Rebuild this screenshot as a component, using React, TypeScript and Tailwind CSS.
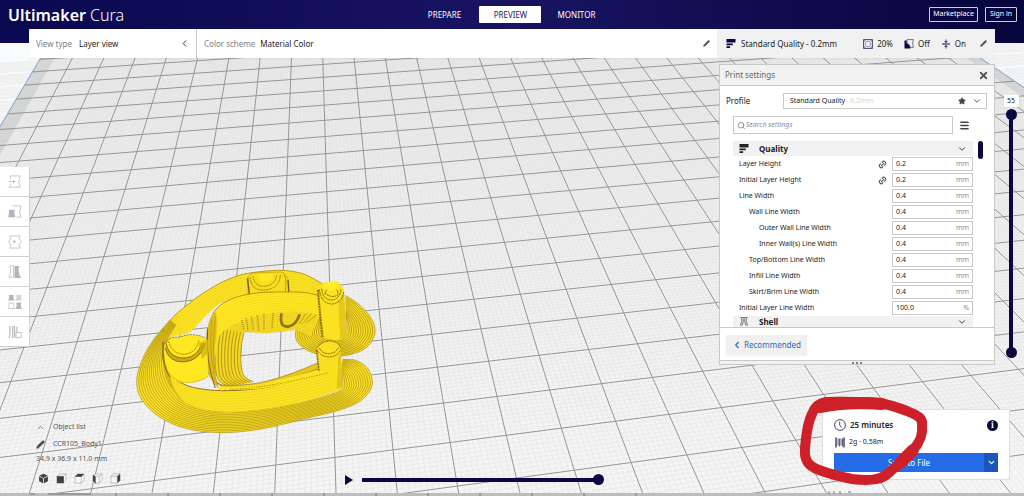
import { ChevronDown, ChevronLeft, ChevronUp, Link2, Menu, Pencil, Search, Star, X } from 'lucide-react';

type Point = [number, number];

const settings = [
  { id: 'layer-height', label: 'Layer Height', value: '0.2', unit: 'mm', indent: 'pl-0', linked: true },
  { id: 'initial-layer-height', label: 'Initial Layer Height', value: '0.2', unit: 'mm', indent: 'pl-0', linked: true },
  { id: 'line-width', label: 'Line Width', value: '0.4', unit: 'mm', indent: 'pl-0', linked: false },
  { id: 'wall-line-width', label: 'Wall Line Width', value: '0.4', unit: 'mm', indent: 'pl-[10px]', linked: false },
  { id: 'outer-wall', label: 'Outer Wall Line Width', value: '0.4', unit: 'mm', indent: 'pl-5', linked: false },
  { id: 'inner-wall', label: 'Inner Wall(s) Line Width', value: '0.4', unit: 'mm', indent: 'pl-5', linked: false },
  { id: 'top-bottom', label: 'Top/Bottom Line Width', value: '0.4', unit: 'mm', indent: 'pl-[10px]', linked: false },
  { id: 'infill', label: 'Infill Line Width', value: '0.4', unit: 'mm', indent: 'pl-[10px]', linked: false },
  { id: 'skirt-brim', label: 'Skirt/Brim Line Width', value: '0.4', unit: 'mm', indent: 'pl-[10px]', linked: false },
  { id: 'initial-line-width', label: 'Initial Layer Line Width', value: '100.0', unit: '%', indent: 'pl-0', linked: false },
];

// Build plate perspective: both line families meet on the horizon
const HORIZON = -395;

const columnX = (i: number, y: number) => 309 + ((72 + 31.35 * i - 309) * (y - HORIZON)) / 454;

const columnPath = (i: number) => `M${columnX(i, 40).toFixed(1)} 40L${columnX(i, 496).toFixed(1)} 496`;

const rowPath = (j: number) => {
  const y = 1 / (0.002172 - 0.00005902 * j) + HORIZON;
  const slope = (HORIZON - y) / (6950 - 309);
  return `M-20 ${(y - 329 * slope).toFixed(1)}L1044 ${(y + 735 * slope).toFixed(1)}`;
};

const range = (from: number, to: number) => Array.from({ length: to - from + 1 }, (_, n) => from + n);

const majorGrid = range(0, 28).map(columnPath).join('') + range(-2, 19).map(rowPath).join('');
const minorGrid =
  range(-5, 285).filter((n) => n % 10 !== 0).map((n) => columnPath(n / 10)).join('') +
  range(-20, 190).filter((n) => n % 10 !== 0).map((n) => rowPath(n / 10)).join('');

const band = (a: number, b: number) =>
  `M${columnX(a, 40)} 40L${columnX(b, 40)} 40L${columnX(b, 496)} 496L${columnX(a, 496)} 496Z`;

const smooth = (pts: Point[]) => {
  let d = `M${pts[0][0]} ${pts[0][1]}`;
  for (let i = 0; i < pts.length - 1; i++) {
    const p0 = pts[Math.max(i - 1, 0)];
    const p1 = pts[i];
    const p2 = pts[i + 1];
    const p3 = pts[Math.min(i + 2, pts.length - 1)];
    const c1 = [p1[0] + (p2[0] - p0[0]) / 6, p1[1] + (p2[1] - p0[1]) / 6];
    const c2 = [p2[0] - (p3[0] - p1[0]) / 6, p2[1] - (p3[1] - p1[1]) / 6];
    d += `C${c1[0].toFixed(1)} ${c1[1].toFixed(1)} ${c2[0].toFixed(1)} ${c2[1].toFixed(1)} ${p2[0]} ${p2[1]}`;
  }
  return d;
};

// Contour lines running from one edge of a surface to the other
const contours = (a: Point[], b: Point[], count: number) =>
  range(0, count)
    .map((n) => smooth(a.map((p, k) => [p[0] + ((b[k][0] - p[0]) * n) / count, p[1] + ((b[k][1] - p[1]) * n) / count] as Point)))
    .join('');

const surface = (a: Point[], b: Point[]) => smooth(a) + smooth([...b].reverse()).replace('M', 'L') + 'Z';

const brimOuter: Point[] = [[150, 180], [100, 240], [66, 300], [50, 365], [66, 420], [120, 472], [200, 506], [310, 518], [430, 506], [560, 475], [660, 450], [725, 420], [757, 375], [745, 328], [710, 302], [668, 298]];
const brimInner: Point[] = [[168, 195], [143, 235], [131, 280], [133, 330], [148, 375], [180, 418], [240, 444], [310, 454], [420, 448], [530, 430], [610, 410], [650, 397], [666, 386], [668, 370], [667, 350], [664, 330]];
const frontTop: Point[] = [[133, 245], [128, 290], [145, 338], [190, 372], [250, 388], [330, 392], [430, 384], [530, 362], [625, 336]];
const frontBottom: Point[] = [[135, 330], [145, 378], [175, 414], [225, 440], [285, 453], [350, 455], [460, 443], [570, 420], [665, 388]];
const backTop: Point[] = [[130, 230], [150, 182], [205, 132], [265, 90], [325, 58], [385, 40], [480, 31], [550, 42], [608, 72]];
const backBottom: Point[] = [[142, 250], [160, 228], [210, 215], [262, 162], [310, 125], [395, 104], [480, 100], [545, 100], [600, 115]];
const archTop: Point[] = [[262, 250], [268, 190], [292, 144], [340, 115], [410, 99], [490, 96], [555, 98], [600, 108]];
const archBottom: Point[] = [[290, 290], [294, 240], [312, 212], [360, 185], [430, 163], [500, 155], [560, 158], [602, 165]];
const ledgeBottom: Point[] = [[365, 290], [364, 235], [370, 218], [395, 217], [440, 219], [490, 214], [530, 211], [570, 230]];
const leftBrimA: Point[] = [[292, 205], [286, 260], [286, 320], [296, 360], [325, 380]];
const leftBrimB: Point[] = [[372, 218], [364, 260], [363, 310], [372, 348], [400, 366]];
const innerFrontTop: Point[] = [[262, 210], [258, 270], [262, 330], [285, 366], [330, 376], [420, 368], [510, 342], [595, 308]];
const innerFrontBottom: Point[] = [[275, 215], [270, 275], [276, 335], [298, 372], [335, 388], [430, 382], [530, 360], [625, 336]];
const padOuter: Point[] = [[600, 160], [550, 180], [527, 215], [535, 250], [575, 277], [630, 288], [690, 284], [740, 262], [765, 218], [752, 172], [715, 132], [676, 106]];
const padInner: Point[] = [[606, 185], [604, 200], [602, 212], [604, 222], [612, 232], [630, 238], [655, 238], [672, 230], [680, 218], [681, 200], [680, 182], [678, 165]];

const Model = () => (
  <g transform="translate(120 260) scale(0.3333)" fill="#f6df20" strokeLinejoin="round">
    <path d={surface(backTop, backBottom)} fill="#fbe223" />
    <path d={contours(backTop, backBottom, 8)} fill="none" stroke="#dfc21a" strokeWidth="1.2" />
    <path d={smooth(backTop)} fill="none" stroke="#b1920f" strokeWidth="2.5" />
    <path d={surface(brimOuter, brimInner)} fill="#fbe128" />
    <path d={contours(brimOuter, brimInner, 13)} fill="none" stroke="#a3850e" strokeWidth="1.8" />
    <path d={surface(padOuter, padInner)} fill="#f7dc25" />
    <path d={contours(padOuter, padInner, 12)} fill="none" stroke="#9b7e0e" strokeWidth="1.8" />

    {/* Boss at the back */}
    <path d="M382 55Q388 40 410 38L485 36Q502 42 506 68L505 100Q440 92 385 106Z" fill="#f7dd1f" stroke="#b8990f" strokeWidth="2" />
    <path d="M383 55L388 103M504 60L507 101" fill="none" stroke="#7a5c07" strokeWidth="4" />
    <g fill="none" stroke="#8a6d0a" strokeWidth="2.5" strokeDasharray="5 2">
      <path d="M390 52Q394 92 432 90Q478 88 481 45" />
      <path d="M399 49Q403 79 433 79Q467 76 470 44" />
      <path d="M492 44Q501 57 496 97" />
    </g>
    <path d="M412 43Q416 68 436 68Q456 64 460 42Z" fill="#ffe923" />

    {/* Inner arch */}
    <path d={surface(archBottom, ledgeBottom)} fill="#f5da22" />
    <path d={contours(archBottom, ledgeBottom, 8)} fill="none" stroke="#c9aa15" strokeWidth="1" strokeDasharray="7 3" />
    <path d={surface(leftBrimA, leftBrimB)} fill="#f3d723" />
    <path d={contours(leftBrimA, leftBrimB, 8)} fill="none" stroke="#937610" strokeWidth="2" />
    <path d={surface(archTop, archBottom)} fill="#ffe823" />
    <path d={contours(archTop, archBottom, 9)} fill="none" stroke="#e6cb1c" strokeWidth="1.4" />
    <path d={smooth(archTop)} fill="none" stroke="#917308" strokeWidth="2.5" strokeDasharray="7 2" />
    <path d="M365 180L372 210M378 174L384 211M394 169L400 211M412 166L416 211M432 163L432 211M459 160L456 208" fill="none" stroke="#a48610" strokeWidth="4" strokeDasharray="3 3" />
    <path d="M485 160Q476 202 505 200Q529 195 539 163" fill="none" stroke="#8f7416" strokeWidth="8" />
    <path d="M558 160L537 193M574 161L548 191M589 165L559 189" fill="none" stroke="#bd9d13" strokeWidth="3" />

    {/* Front and inner walls */}
    <path d={surface(innerFrontTop, innerFrontBottom)} fill="#e6c61a" />
    <path d={contours(innerFrontTop, innerFrontBottom, 2)} fill="none" stroke="#8d700a" strokeWidth="1.8" />
    <path d="M262 205Q272 162 288 156Q294 200 284 260Q281 320 294 382Q264 360 259 300Z" fill="#dfbe1a" />
    <path d="M263 205Q255 300 286 384" fill="none" stroke="#7c600a" strokeWidth="3" />
    <path d="M275 178Q264 300 294 384M286 170Q275 280 286 340" fill="none" stroke="#b3930f" strokeWidth="2" />
    <path d={surface(frontTop, frontBottom)} fill="#fce425" />
    <path d={contours(frontTop, frontBottom, 8)} fill="none" stroke="#e0c51a" strokeWidth="1.2" />
    <path d="M128 270Q126 330 148 378L178 416L195 430Q155 390 150 345Z" fill="#c6a312" opacity=".7" />
    <path d={smooth(frontTop)} fill="none" stroke="#80640a" strokeWidth="2.5" />
    <path d="M300 378Q360 386 440 368Q530 348 625 322L625 342Q520 370 430 385Q350 393 292 388Z" fill="#fce425" />
    <path d="M330 388Q440 385 625 338" fill="none" stroke="#8f7109" strokeWidth="2.5" strokeDasharray="4 4" />

    {/* Left boss */}
    <path d="M136 255Q145 230 175 232L205 224Q245 226 262 240L264 350Q230 374 180 367Q145 355 132 310Z" fill="#ffe822" />
    <path d="M136 262Q145 306 190 306Q238 304 257 250L246 249Q231 290 193 292Q149 293 140 250Z" fill="#cbaa17" />
    <g fill="none" stroke="#7d610a" strokeWidth="2.5">
      <path d="M136 265Q145 306 190 306Q238 304 257 250" />
      <path d="M139 253Q149 295 193 294Q231 292 246 249" strokeDasharray="7 2" />
      <path d="M146 245Q157 283 194 283Q229 278 237 241" strokeDasharray="4 2" />
      <path d="M137 252Q148 228 175 232L205 224Q240 224 256 234" strokeDasharray="6 3" />
      <path d="M132 300Q146 358 190 367Q237 370 265 348" strokeDasharray="5 2" stroke="#c9a812" />
    </g>
    <path d="M128 245Q128 320 150 352" fill="none" stroke="#8a6d0a" strokeWidth="3" />
    <path d="M236 250L263 238L264 280L246 298Z" fill="#cdaa14" opacity=".65" />

    {/* Right pins */}
    <path d="M594 90Q606 68 620 67L648 64Q663 70 672 90L681 230Q650 250 608 232Z" fill="#fae222" />
    <path d="M672 100L681 230Q673 240 660 238L655 126Z" fill="#dbb817" opacity=".65" />
    <path d="M594 90L600 160L608 232" fill="none" stroke="#8e700a" strokeWidth="6" strokeDasharray="6 2" />
    <g fill="none" stroke="#836607" strokeWidth="3" strokeDasharray="6 2">
      <path d="M598 88Q604 132 637 132Q667 128 671 95" />
      <path d="M605 86Q608 119 635 120Q660 118 663 87" />
      <path d="M615 101Q618 84 637 85Q656 86 654 104Q639 116 615 101Z" />
    </g>
    <path d="M611 72Q630 61 652 68L655 86Q634 96 614 87Z" fill="#ffed27" />
    <path d="M590 268Q604 242 632 243Q658 245 663 270L668 380Q658 394 635 386L624 337L596 333Z" fill="#f9e122" />
    <path d="M590 270L597 334" fill="none" stroke="#8e700a" strokeWidth="5" strokeDasharray="6 2" />
    <path d="M655 290L662 270L668 380L650 388Z" fill="#dab719" opacity=".7" />
    <g fill="none" stroke="#836607" strokeWidth="3" strokeDasharray="6 2">
      <path d="M590 268Q602 291 629 291Q655 288 662 268" />
      <path d="M598 264Q608 282 628 281Q649 279 655 263" />
      <path d="M592 262Q608 242 632 243Q657 245 662 264" />
    </g>
  </g>
);

const Scene = () => (
  <svg className="absolute inset-0 h-full w-full" viewBox="0 0 1024 496" preserveAspectRatio="xMidYMid slice" aria-hidden="true">
    <defs>
      <linearGradient id="plate" x1="0" y1="0" x2="0" y2="1">
        <stop offset="0" stopColor="#ebebeb" />
        <stop offset="1" stopColor="#f5f5f5" />
      </linearGradient>
    </defs>
    <rect width="1024" height="496" fill="#fafbfc" />
    <path d={band(-1.02, 29.02)} fill="#cdcfcf" />
    <path d={band(-0.57, 28.57)} fill="url(#plate)" />
    <path d={minorGrid} fill="none" stroke="#e1e1e1" strokeWidth=".5" />
    <g fill="none" stroke="#959595" strokeWidth="1">
      <clipPath id="plate-clip">
        <path d={band(-1.02, 29.02)} />
      </clipPath>
      <path d={majorGrid} clipPath="url(#plate-clip)" />
    </g>
    <path d={columnPath(-1.02) + columnPath(29.02)} fill="none" stroke="#7ca3cf" strokeWidth="1" />
    <Model />
    <rect y="493" width="1024" height="3" fill="#bdbdbd" />
    <path d="M30 494h5M48 494h43M116 493v3M168 493v3M220 493v3M272 493v3M324 493v3M376 493v3M428 493v3M480 493v3M532 493v3M584 493v3M636 493v3M829 491v3M834 491v3M840 491v3M848 492h3" fill="none" stroke="#777" />
  </svg>
);

const QualityIcon = ({ className }: { className: string }) => (
  <svg viewBox="0 0 10 10" className={className} fill="currentColor" aria-hidden="true">
    <path d="M0 0h10v4H0zM0 5h7v2H0zM0 8h4v2H0z" />
  </svg>
);

const InfillIcon = () => (
  <svg viewBox="0 0 10 10" className="h-[10px] w-[10px]" fill="none" stroke="#33335f" strokeWidth=".8" aria-hidden="true">
    <path d="M.5.5h9v9h-9zM.5 3L3 .5M7 .5L9.5 3M.5 7L3 9.5M7 9.5L9.5 7" />
    <circle cx="5" cy="5" r="2.8" strokeDasharray="1.4 .6" />
  </svg>
);

const SupportIcon = () => (
  <svg viewBox="0 0 10 10" className="h-[10px] w-[10px]" aria-hidden="true">
    <path d="M3 .6h6.4q-1.5 3 0 7.7H6Q5.5 4.5 3 4z" fill="none" stroke="#444" strokeWidth=".7" />
    <path d="M.5 1.5h2.200v3q3.300 1 3.800 5H.5z" fill="#08073f" />
  </svg>
);

const AdhesionIcon = () => (
  <svg viewBox="0 0 10 10" className="h-[10px] w-[10px]" aria-hidden="true">
    <path d="M1 5h8" stroke="#33335f" strokeWidth="1.2" />
    <path d="M5 .5v3M5 9.5v-3" stroke="#555577" strokeWidth="1.2" />
    <path d="M3 2h4L5 4.200zM3 8h4L5 5.800z" fill="#555577" />
  </svg>
);

const ShellIcon = () => (
  <svg viewBox="0 0 10 10" className="h-[9px] w-[10px]" fill="none" stroke="#555" aria-hidden="true">
    <path d="M1 .5h8M2 1q2 4-1 8h2q2-4 1-8M8 1Q6 5 9 9H7Q5 5 6 1" strokeWidth=".8" />
  </svg>
);

const SpoolIcon = () => (
  <svg viewBox="0 0 10 11" className="h-[11px] w-[10px]" fill="none" stroke="#171545" aria-hidden="true">
    <path d="M1 .5v10M9 .5v10" strokeWidth="1.2" />
    <path d="M3 1.5v7M4.500 1.500v8M6 1.500v7M7.500 1.500v8" strokeWidth=".7" />
  </svg>
);

const ClockIcon = () => (
  <svg viewBox="0 0 12 12" className="h-3 w-3" fill="none" stroke="#171545" strokeWidth=".8" aria-hidden="true">
    <circle cx="6" cy="6" r="5.4" />
    <path d="M5.7 2.5V6L7.5 8.5" />
  </svg>
);

const tools = [
  {
    name: 'Move',
    icon: (
      <g fill="none" stroke="#c4c4cb">
        <path d="M2 1h11q-3 6 0 12H1q2-2 2-4M2 1q1 2 1 4" />
        <path d="M1 7h5" />
        <path d="M5.500 5l2.500 2-2.500 2z" fill="#b4b4bf" stroke="none" />
      </g>
    ),
  },
  {
    name: 'Scale',
    icon: (
      <>
        <path d="M5 1h9q-3 6 0 12H9" fill="none" stroke="#c4c4cc" />
        <path d="M1 5h6q-1 4 1 8H0q2-4 1-8z" fill="#b4b4bf" />
      </>
    ),
  },
  {
    name: 'Rotate',
    icon: (
      <g fill="none" stroke="#c4c4cb">
        <path d="M2 1h11q-1 2-1 3M12 10l1 4H2l1-4M3 4L2 1" />
        <path d="M3 4L.5 7 3 10M12 4l2.500 3L12 10M5 7h2" />
        <path d="M6 5l2.500 2L6 9z" fill="#b4b4bf" stroke="none" />
      </g>
    ),
  },
  {
    name: 'Mirror',
    icon: (
      <>
        <path d="M6 1H2q2 6-1 12h5z" fill="none" stroke="#c4c4cc" />
        <path d="M7 1h5q-2 6 2 13H7z" fill="#b4b4bf" />
      </>
    ),
  },
  {
    name: 'Per model settings',
    icon: (
      <>
        <path d="M1 0h5q-1 3 1 6H0q2-3 1-6zM9 8h5q-1 3 1 7H8q2-4 1-7z" fill="#b4b4bf" />
        <path d="M9 0h5q-1 3 1 6H8q2-3 1-6z" fill="#d0d0d7" />
        <path d="M1 8.500h5q-1 3 1 6H.5q1.500-3 .5-6z" fill="none" stroke="#c4c4cc" />
      </>
    ),
  },
  {
    name: 'Support blocker',
    icon: (
      <g fill="none" stroke="#c0c0c8">
        <path d="M2 1v8q0 3-1 5M5 1v13M7 1v13M9.500 2v6" strokeWidth="1.4" />
        <path d="M8.500 8H14v5.500H8.500z" />
      </g>
    ),
  },
];

const CubeIcon = ({ face }: { face: string }) => (
  <svg viewBox="0 0 12 12" className="h-[11px] w-[11px]" aria-hidden="true">
    <path d="M1 3.5L4 1h7v7l-3 3H1zM1 3.5h7V11M8 3.5L11 1" fill="#f7f7f7" stroke="#999" strokeWidth=".6" />
    <path d={face} fill="#414141" />
  </svg>
);

const views = [
  { name: 'Front view', face: 'M1 3.5h7.500V11H1z' },
  { name: 'Top view', face: 'M1 4L4 1h7L8 4z' },
  { name: 'Left view', face: 'M1 1.5l3 2.500v7.500L1 9z' },
  { name: 'Right view', face: 'M8 3.5L11 1v7l-3 3z' },
];

const thumb =
  'appearance-none bg-transparent [&::-webkit-slider-thumb]:pointer-events-auto [&::-webkit-slider-thumb]:h-[11px] [&::-webkit-slider-thumb]:w-[11px] [&::-webkit-slider-thumb]:appearance-none [&::-webkit-slider-thumb]:rounded-full [&::-webkit-slider-thumb]:bg-[#0a083f]';

const Header = () => (
  <header className="relative h-[43px] bg-linear-to-r from-[#0a0850] via-[#191462] to-[#07063c]">
    <div className="grid h-[29px] grid-cols-3 items-center">
      <h1 className="pl-2 text-base leading-5 font-semibold text-white">
        Ultimaker <span className="font-light">Cura</span>
      </h1>
      <nav className="flex items-center justify-center pr-[3px] text-[8px] text-white">
        <button className="h-[17px] w-[62px]">PREPARE</button>
        <button className="mx-1 h-[17px] w-[62px] rounded-[1px] bg-white text-[#191462]">PREVIEW</button>
        <button className="h-[17px] w-[62px]">MONITOR</button>
      </nav>
      <div className="flex justify-end gap-[7px] pr-[7px] text-[7px] text-white">
        <button className="h-[15px] w-[49px] rounded-[1px] border border-white/80">Marketplace</button>
        <button className="h-[15px] w-8 rounded-[1px] border border-white/80">Sign in</button>
      </div>
    </div>
  </header>
);

const StageBar = () => (
  <div className="relative mx-[29px] -mt-[14px] flex h-[29px] rounded-[1px] bg-white text-[8px] shadow-xs">
    <button className="flex w-[168px] items-center gap-[7px] border-r border-[#c8c8c8] pr-[6px] pl-[7px]">
      <span className="text-[#808080]">View type</span>
      <span>Layer view</span>
      <ChevronLeft className="ml-auto h-[11px] w-[11px]" />
    </button>
    <button className="flex flex-1 items-center gap-[5px] px-[7px]">
      <span className="text-[#808080]">Color scheme</span>
      <span>Material Color</span>
      <Pencil className="ml-auto h-[7px] w-[7px] fill-[#555] text-[#555]" />
    </button>
    <button className="flex w-[278px] items-center bg-[#f1f1f1] pr-2 pl-[9px]">
      <QualityIcon className="mr-[5px] h-[9px] w-[10px] text-[#08073f]" />
      <span className="flex-1 text-left">Standard Quality - 0.2mm</span>
      <span className="flex items-center gap-1">
        <InfillIcon />
        20%
      </span>
      <span className="ml-[11px] flex items-center gap-1">
        <SupportIcon />
        Off
      </span>
      <span className="ml-[11px] flex items-center gap-1">
        <AdhesionIcon />
        On
      </span>
      <Pencil className="ml-[14px] h-[7px] w-[7px] fill-[#555] text-[#555]" />
    </button>
  </div>
);

const PrintSettings = () => (
  <section className="mt-[6px] w-[276px] border border-[#c8c8c8] bg-white">
    <div className="flex h-[21px] items-center justify-between border-b border-[#c8c8c8] bg-[#f1f1f1] px-[5px]">
      <h2 className="text-[8px] text-[#666]">Print settings</h2>
      <button aria-label="Close">
        <X className="h-[11px] w-[11px] stroke-[4] text-[#555]" />
      </button>
    </div>

    <div className="flex items-center justify-between pt-[7px] pr-[7px] pl-[6px] text-[8px]">
      <label htmlFor="profile">Profile</label>
      <div className="relative h-4 w-[204px] text-[7px]">
        <select id="profile" className="h-full w-full appearance-none border border-[#c8c8c8] bg-white pl-[6px]">
          <option>Standard Quality</option>
        </select>
        <div className="pointer-events-none absolute inset-y-0 right-[5px] left-[63px] flex items-center text-[#d4d4d4]">
          - 0.2mm
          <Star className="mr-[6px] ml-auto h-2 w-2 fill-[#444] text-[#444]" />
          <ChevronDown className="h-[10px] w-[10px] text-[#333]" />
        </div>
      </div>
    </div>

    <div className="mt-[7px] ml-[13px] flex items-center gap-[6px]">
      <label className="flex h-[18px] w-[220px] items-center border border-[#c8c8c8] px-[3px]">
        <Search className="h-[9px] w-[9px] text-[#777]" />
        <input aria-label="Search settings" placeholder="Search settings" className="w-full text-[7px] italic outline-none placeholder:text-[#8c8c8c]" />
      </label>
      <button aria-label="Setting visibility">
        <Menu className="h-[11px] w-[11px] stroke-[3] text-[#444]" />
      </button>
    </div>

    <div className="mt-[7px] ml-[13px] flex h-[186px] gap-[5px]">
      <div className="w-[240px]">
        <button className="flex h-[15px] w-full items-center bg-[#f1f1f1] px-[6px] text-[8px] font-bold">
          <QualityIcon className="mr-[10px] h-[9px] w-[10px]" />
          Quality
          <ChevronDown className="ml-auto h-[10px] w-[10px]" />
        </button>
        <div>
          {settings.map((setting) => (
            <div key={setting.id} className="flex h-4 items-center pl-[6px] text-[7px]">
              <label htmlFor={setting.id} className={`${setting.indent} flex-1`}>
                {setting.label}
              </label>
              {setting.linked && <Link2 className="mr-[5px] h-[9px] w-[9px] -rotate-45 stroke-[3] text-[#555]" />}
              <div className="flex h-[14px] w-[81px] items-center border border-[#c8c8c8] px-[3px]">
                <input id={setting.id} defaultValue={setting.value} className="w-full min-w-0 outline-none" />
                <span className="text-[#909090]">{setting.unit}</span>
              </div>
            </div>
          ))}
        </div>
        <button className="flex h-[11px] w-full items-center bg-[#f1f1f1] px-[6px] text-[8px] leading-[11px] font-bold">
          <span className="mr-[10px]">
            <ShellIcon />
          </span>
          Shell
          <ChevronDown className="ml-auto h-[10px] w-[10px]" />
        </button>
      </div>
      <div className="h-[18px] w-[5px] rounded-full bg-[#0a083f]" />
    </div>

    <div className="border-t border-[#c8c8c8] px-[6px] pt-[7px] pb-[5px]">
      <button className="flex h-5 w-[81px] items-center gap-[2px] rounded-[1px] bg-[#f0f0f0] pl-[6px] text-[8px] text-[#2d68c4] shadow-xs">
        <ChevronLeft className="h-[10px] w-[10px] stroke-[3]" />
        Recommended
      </button>
    </div>
    <div className="flex h-1 items-center justify-center gap-[2px] border-t border-[#c8c8c8] bg-[#f1f1f1]">
      <span className="h-[2px] w-[2px] rounded-full bg-[#555]" />
      <span className="h-[2px] w-[2px] rounded-full bg-[#555]" />
      <span className="h-[2px] w-[2px] rounded-full bg-[#555]" />
    </div>
  </section>
);

const LayerSlider = () => (
  <div className="flex w-[29px] flex-col items-center pt-[37px] pl-[3px]">
    <output className="h-3 w-[15px] bg-white text-center text-[7px] leading-3 shadow-xs">55</output>
    <div className="relative mt-[2px] flex h-[249px] w-[11px] justify-center">
      <div className="my-1 w-1 bg-[#0a083f]" />
      <input type="range" aria-label="Top layer" min="1" max="55" defaultValue="55" className={`${thumb} pointer-events-none absolute inset-0 h-full w-full [direction:rtl] [writing-mode:vertical-lr]`} />
      <input type="range" aria-label="Bottom layer" min="1" max="55" defaultValue="1" className={`${thumb} pointer-events-none absolute inset-0 h-full w-full [direction:rtl] [writing-mode:vertical-lr]`} />
    </div>
  </div>
);

const ObjectInfo = () => (
  <div className="w-[309px] pl-9 text-[7px] leading-[10px] text-[#555]">
    <button className="flex items-center gap-2">
      <ChevronUp className="h-[9px] w-[9px]" />
      Object list
    </button>
    <div className="mt-[7px] flex items-center gap-2">
      <Pencil className="h-[9px] w-[9px] fill-[#444]" />
      CCR105_Body1
    </div>
    <p className="mt-[5px]">34.9 x 36.9 x 11.0 mm</p>
    <div className="mt-[9px] flex gap-[7px] pl-[2px]">
      <button aria-label="3D view">
        <svg viewBox="0 0 12 12" className="h-[11px] w-[11px]" aria-hidden="true">
          <path d="M6 .8l4.800 2.300v6L6 11.500 1.200 9.100v-6z" fill="#414141" />
          <path d="M1.200 3.300L6 5.800l4.800-2.500M6 5.800v5.700" fill="none" stroke="#eee" strokeWidth=".9" />
        </svg>
      </button>
      {views.map((view) => (
        <button key={view.name} aria-label={view.name}>
          <CubeIcon face={view.face} />
        </button>
      ))}
    </div>
  </div>
);

const SavePanel = () => (
  <section className="mr-[14px] mb-4 ml-auto w-[188px] border border-[#dedede] bg-white px-[11px] pt-[9px] pb-[7px]">
    <div className="flex items-center gap-1 text-[8px] leading-3 font-semibold">
      <ClockIcon />
      25 minutes
      <button aria-label="Print details" className="ml-auto h-[11px] w-[11px] rounded-full bg-[#08073f] font-serif text-[9px] leading-[11px] font-bold text-white">
        i
      </button>
    </div>
    <div className="mt-[5px] flex items-center gap-1 pl-[1px] text-[7px] leading-3">
      <SpoolIcon />
      2g · 0.58m
    </div>
    <div className="mt-[5px] flex h-[19px] text-[8px] text-white">
      <button className="flex-1 bg-[#256de8]">Save to File</button>
      <button aria-label="More save options" className="flex w-[14px] items-center justify-center bg-[#1d56bb]">
        <ChevronDown className="h-[9px] w-[9px] stroke-[3]" />
      </button>
    </div>
  </section>
);

// Hand-drawn loop round the print time
const Marker = () => (
  <svg className="pointer-events-none absolute right-[95px] bottom-[9px] h-[92px] w-[132px]" viewBox="797 395 132 92" fill="none" aria-hidden="true">
    <path
      d="M805 448C806 436 808 422 812 414C815 406 819 403 826 402C844 401 862 402 880 403C890 405 899 408 907 411C916 415 923 417 922 425C923 434 921 441 913 450C908 457 901 463 893 469C887 475 883 478 876 479C868 481 861 480 852 479C842 477 830 474 819 470C808 466 804 460 805 448Z"
      stroke="#ce2029"
      strokeWidth="10"
      strokeLinejoin="round"
    />
    <path d="M820 407Q850 401 882 404M900 463L913 450" stroke="#ce2029" strokeWidth="12" strokeLinecap="round" />
  </svg>
);

export default function App() {
  return (
    <div className="relative flex min-h-screen flex-col overflow-hidden font-['Noto_Sans',sans-serif] text-[#222]">
      <Scene />
      <Header />
      <StageBar />
      <main className="relative flex flex-1 flex-col">
        <div className="flex items-start">
          <div className="mt-[109px] w-[30px] border-r border-[#d0d0d0] bg-white">
            {tools.map((tool) => (
              <button key={tool.name} aria-label={tool.name} className="flex h-[30px] w-full items-center justify-center border-b border-[#d0d0d0]">
                <svg viewBox="0 0 15 15" className="h-[14px] w-[14px]" aria-hidden="true">
                  {tool.icon}
                </svg>
              </button>
            ))}
          </div>
          <div className="flex-1" />
          <PrintSettings />
          <LayerSlider />
        </div>
        <div className="mt-auto flex items-end">
          <div className="pb-3">
            <ObjectInfo />
          </div>
          <div className="flex flex-1 items-center gap-[9px] pb-[11px] pl-9">
            <button aria-label="Play">
              <svg viewBox="0 0 8 10" className="h-[10px] w-2" aria-hidden="true">
                <path d="M0 0l8 5-8 5z" fill="#0a083f" />
              </svg>
            </button>
            <div className="relative flex h-[11px] w-[242px] items-center">
              <div className="mr-1 h-1 w-full bg-[#0a083f]" />
              <input type="range" aria-label="Layer path" defaultValue="100" className={`${thumb} absolute inset-0 h-full w-full`} />
            </div>
          </div>
          <SavePanel />
        </div>
      </main>
      <Marker />
    </div>
  );
}
